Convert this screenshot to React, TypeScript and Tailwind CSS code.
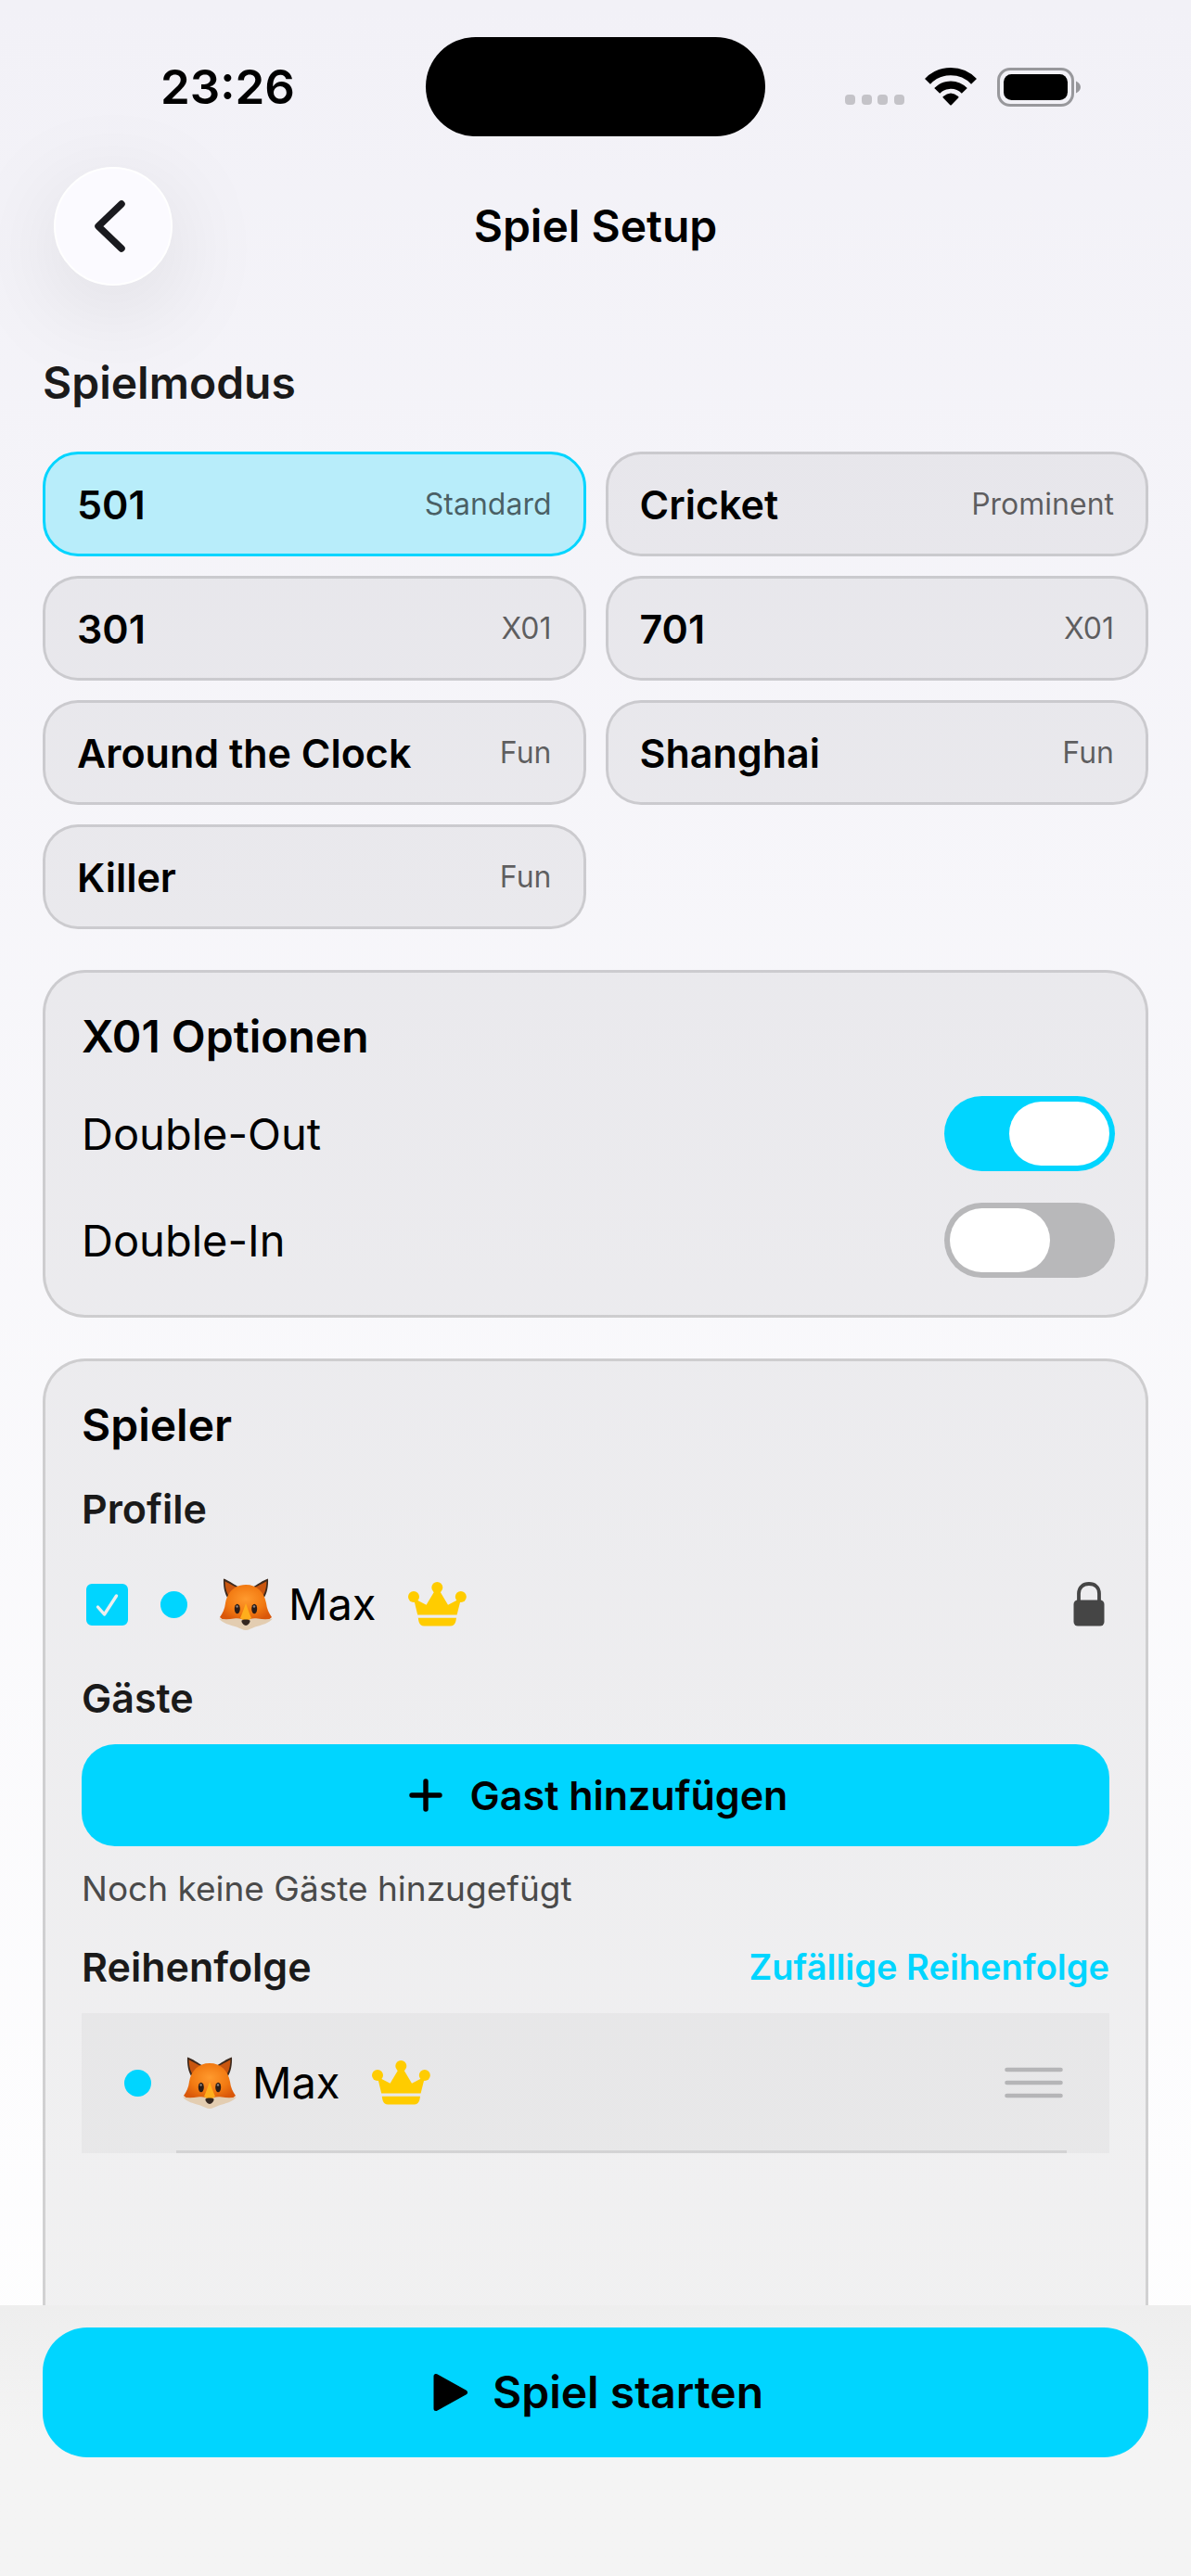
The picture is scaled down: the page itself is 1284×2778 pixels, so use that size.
import { useState } from 'react';

const modes = [
  { name: '501', tag: 'Standard' },
  { name: 'Cricket', tag: 'Prominent' },
  { name: '301', tag: 'X01' },
  { name: '701', tag: 'X01' },
  { name: 'Around the Clock', tag: 'Fun' },
  { name: 'Shanghai', tag: 'Fun' },
  { name: 'Killer', tag: 'Fun' },
];

function WifiIcon() {
  return (
    <svg width="56" height="41" viewBox="0 0 56 41" fill="none" stroke="black" strokeWidth="8.2">
      <path d="M3 14.8A34.6 34.6 0 0 1 53 14.8" />
      <path d="M13.2 24.9A20.4 20.4 0 0 1 42.8 24.9" />
      <path
        d="M28 39.5L20.5 31.8Q28 25.2 35.5 31.8Z"
        fill="black"
        strokeWidth="2"
        strokeLinejoin="round"
      />
    </svg>
  );
}

function BatteryIcon() {
  return (
    <svg width="91" height="42" viewBox="0 0 91 42">
      <rect x="1.5" y="1.5" width="80" height="39" rx="12.5" fill="none" stroke="#98989c" strokeWidth="3" />
      <rect x="7" y="7" width="69" height="28" rx="8.5" fill="black" />
      <path d="M85 14.5C88 16 90 18 90 21C90 24 88 26 85 27.5Z" fill="#98989c" />
    </svg>
  );
}

function SignalDots() {
  return (
    <svg width="64" height="11" viewBox="0 0 64 11" fill="#c4c3c8">
      <rect x="0" y="0" width="11" height="11" rx="4" />
      <rect x="18" y="0" width="11" height="11" rx="4" />
      <rect x="35" y="0" width="11" height="11" rx="4" />
      <rect x="53" y="0" width="11" height="11" rx="4" />
    </svg>
  );
}

function CrownIcon() {
  return (
    <svg width="63" height="48" viewBox="0 0 63 48" fill="#ffcc00" className="shrink-0">
      <circle cx="31.3" cy="6" r="6" />
      <circle cx="6" cy="16" r="6" />
      <circle cx="56.8" cy="16" r="6" />
      <path d="M6 18L9.5 19.5L19.6 24.8L29 9H33.6L43 24.8L53 19.5L57 18L52.6 35.5H10.2Z" />
      <path d="M10.8 38.7H52C51.4 42 51.2 47.4 45.6 47.4H17.2C11.6 47.4 11.4 42 10.8 38.7Z" />
    </svg>
  );
}

function LockIcon() {
  return (
    <svg width="34" height="48" viewBox="0 0 34 48">
      <rect x="0.5" y="19.5" width="33" height="28" rx="4.5" fill="#454545" />
      <path d="M6 21V12.5C6 6 10.5 2 17 2S28 6 28 12.5V21" fill="none" stroke="#454545" strokeWidth="3.8" />
    </svg>
  );
}

function FoxIcon() {
  return (
    <svg width="58" height="56" viewBox="0 0 58 56" className="shrink-0">
      <defs>
        <radialGradient id="fox-face" cx="50%" cy="38%" r="60%">
          <stop offset="0" stopColor="#ff9a2e" />
          <stop offset="0.6" stopColor="#f27a12" />
          <stop offset="1" stopColor="#d9570a" />
        </radialGradient>
      </defs>
      <path d="M5 0.5C4.6 8 6 17 10 22L22 10C17 7 10 2 5 0.5Z" fill="#3d2a1e" />
      <path d="M53 0.5C53.4 8 52 17 48 22L36 10C41 7 48 2 53 0.5Z" fill="#3d2a1e" />
      <path d="M6.6 3.2C6.6 10 8.5 17 12 21L22 11C17 9 10 5 6.6 3.2Z" fill="#c9560f" />
      <path d="M51.4 3.2C51.4 10 49.5 17 46 21L36 11C41 9 48 5 51.4 3.2Z" fill="#c9560f" />
      <path
        d="M29 7C17 7 9 15 7 27C6.4 33 4 38 1 42L8 48H50L57 42C54 38 51.6 33 51 27C49 15 41 7 29 7Z"
        fill="url(#fox-face)"
      />
      <path
        d="M0 43.5C5 44.5 11 44.5 16 43.5C21 42.5 25 43.5 29 46.5C33 43.5 37 42.5 42 43.5C47 44.5 53 44.5 58 43.5C54 48.5 46 50.5 39 52.5C35 54 32 56 29 56C26 56 23 54 19 52.5C12 50.5 4 48.5 0 43.5Z"
        fill="#e3cdb1"
      />
      <path d="M29 27C27 33 25 38 23 43L29 46.5L35 43C33 38 31 33 29 27Z" fill="#ffae1c" />
      <ellipse cx="19.8" cy="33" rx="3" ry="5.2" fill="#2a1c17" />
      <ellipse cx="38.2" cy="33" rx="3" ry="5.2" fill="#2a1c17" />
      <circle cx="19.6" cy="30.5" r="1.2" fill="#8f8580" />
      <circle cx="38" cy="30.5" r="1.2" fill="#8f8580" />
      <path d="M24.4 45.8C26 44 32 44 33.6 45.8C33.6 48.5 31 51 29 51S24.4 48.5 24.4 45.8Z" fill="#33261f" />
    </svg>
  );
}

function Player({ name }: { name: string }) {
  return (
    <>
      <span className="size-[29px] rounded-full bg-[#00d5ff]" />
      <span className="ml-[34px] flex items-center gap-[17px] text-[47px]/[60px]">
        <FoxIcon />
        {name}
      </span>
      <span className="ml-[34px]">
        <CrownIcon />
      </span>
    </>
  );
}

interface SwitchRowProps {
  label: string;
  checked: boolean;
  onChange: (checked: boolean) => void;
}

function SwitchRow({ label, checked, onChange }: SwitchRowProps) {
  return (
    <label className="flex items-center justify-between text-[47px]/[60px]">
      {label}
      <input
        type="checkbox"
        role="switch"
        checked={checked}
        onChange={(e) => onChange(e.target.checked)}
        className="h-[81px] w-[184px] shrink-0 cursor-pointer appearance-none rounded-full bg-[#b8b8ba] p-1.5 before:block before:h-[69px] before:w-[108px] before:rounded-full before:bg-white checked:bg-[#00d5ff] checked:before:ml-16"
      />
    </label>
  );
}

export default function App() {
  const [mode, setMode] = useState('501');
  const [doubleOut, setDoubleOut] = useState(true);
  const [doubleIn, setDoubleIn] = useState(false);
  const [maxSelected, setMaxSelected] = useState(true);

  return (
    <div className="flex h-screen flex-col bg-linear-to-b from-[#f2f1f7] to-white font-['Inter',sans-serif] text-black">
      {/* Status bar */}
      <div className="grid shrink-0 grid-cols-[1fr_366px_1fr] items-center pt-10">
        <div className="pl-8 text-center text-[51px]/[60px] font-semibold">23:26</div>
        <div className="h-[107px] rounded-full bg-black" />
        <div className="flex items-center justify-center gap-[22px] pr-8">
          <span className="pt-7">
            <SignalDots />
          </span>
          <WifiIcon />
          <BatteryIcon />
        </div>
      </div>

      {/* Navigation */}
      <header className="grid shrink-0 grid-cols-[128px_1fr_128px] items-center px-[58px] pt-[33px]">
        <button
          aria-label="Zurück"
          className="flex size-32 items-center justify-center rounded-full border-2 border-white bg-[#fbfaff] pr-2 shadow-[0_24px_110px_rgba(0,0,0,0.1)]">
          <svg width="34" height="58" viewBox="0 0 34 58" fill="none" stroke="#1a1a1f" strokeWidth="7.5" strokeLinecap="round" strokeLinejoin="round">
            <path d="M30 5L5 29L30 53" />
          </svg>
        </button>
        <h1 className="text-center text-5xl/[60px] font-semibold">Spiel Setup</h1>
      </header>

      <main className="min-h-0 flex-1 overflow-y-auto px-[46px] pt-[75px] [scrollbar-width:none]">
        <h2 className="text-5xl/[60px] font-semibold text-[#1a1a1a]">Spielmodus</h2>

        <div className="mt-11 grid grid-cols-2 gap-[21px]">
          {modes.map((m) => (
            <button
              key={m.name}
              aria-pressed={m.name === mode}
              onClick={() => setMode(m.name)}
              className={`flex h-[113px] items-center justify-between rounded-[38px] border-3 px-[34px] ${
                m.name === mode ? 'border-[#00d5ff] bg-[#b8edfa]' : 'border-black/13 bg-black/5'
              }`}>
              <span className="text-[43px]/[54px] font-semibold">{m.name}</span>
              <span className="text-[32px]/[40px] text-black/60">{m.tag}</span>
            </button>
          ))}
        </div>

        <section className="mt-11 flex flex-col gap-[34px] rounded-[46px] border-3 border-black/13 bg-black/5 pt-[39px] pr-[33px] pb-10 pl-[39px]">
          <h2 className="text-5xl/[60px] font-semibold">X01 Optionen</h2>
          <SwitchRow label="Double-Out" checked={doubleOut} onChange={setDoubleOut} />
          <SwitchRow label="Double-In" checked={doubleIn} onChange={setDoubleIn} />
        </section>

        <section className="mt-11 rounded-[46px] border-3 border-black/13 bg-black/5 px-[39px] pt-[39px] pb-80">
          <h2 className="text-5xl/[60px] font-semibold">Spieler</h2>

          <h3 className="mt-[33px] text-[43px]/[54px] font-semibold text-[#1a1a1a]">Profile</h3>
          <div className="mt-9 flex h-20 items-center px-[5px]">
            <span className="mr-[35px] grid">
              <input
                type="checkbox"
                aria-label="Max"
                checked={maxSelected}
                onChange={(e) => setMaxSelected(e.target.checked)}
                className="peer col-start-1 row-start-1 size-[45px] cursor-pointer appearance-none rounded-md border-3 border-[#00d5ff] checked:bg-[#00d5ff]"
              />
              <svg
                viewBox="0 0 45 45"
                fill="none"
                stroke="#eeeeee"
                strokeWidth="3.4"
                strokeLinecap="round"
                strokeLinejoin="round"
                className="pointer-events-none invisible col-start-1 row-start-1 size-[45px] peer-checked:visible">
                <path d="M12.5 25L19.5 33L32.5 13" />
              </svg>
            </span>
            <Player name="Max" />
            <span className="ml-auto">
              <LockIcon />
            </span>
          </div>

          <h3 className="mt-[34px] text-[43px]/[54px] font-semibold text-[#1a1a1a]">Gäste</h3>
          <button className="mt-[23px] flex h-[110px] w-full items-center justify-center gap-[30px] rounded-[36px] bg-[#00d5ff] pl-1.5 text-[43px]/[54px] font-semibold">
            <svg width="36" height="36" viewBox="0 0 36 36" stroke="black" strokeWidth="5.4" strokeLinecap="round">
              <path d="M18 3V33M3 18H33" />
            </svg>
            Gast hinzufügen
          </button>
          <p className="mt-[22px] text-[37px]/[48px] text-[#4a4a4a]">Noch keine Gäste hinzugefügt</p>

          <div className="mt-[33px] flex items-center justify-between">
            <h3 className="text-[43px]/[54px] font-semibold text-[#1a1a1a]">Reihenfolge</h3>
            <button className="text-[38px]/[48px] font-semibold text-[#00d5ff]">Zufällige Reihenfolge</button>
          </div>
          <ul className="mt-[23px] bg-black/3">
            <li>
              <div className="flex h-[148px] items-center pt-0.5 pr-[50px] pl-[46px]">
                <Player name="Max" />
                <svg width="63" height="34" viewBox="0 0 63 34" stroke="#b5b5b7" strokeWidth="4.6" strokeLinecap="round" className="ml-auto">
                  <path d="M2.5 3H60.5M2.5 17H60.5M2.5 31H60.5" />
                </svg>
              </div>
              <div className="mr-[46px] ml-[102px] h-[3px] bg-black/9" />
            </li>
          </ul>
        </section>
      </main>

      <footer className="shrink-0 bg-linear-to-b from-[#eeeeee] via-[#f4f4f4] to-[#f4f4f4] px-[46px] pt-6 pb-32">
        <button className="flex h-[140px] w-full items-center justify-center gap-[26px] rounded-[48px] bg-[#00d5ff] pl-1.5 text-5xl/[60px] font-semibold">
          <svg width="38" height="42" viewBox="0 0 38 42" stroke="black" strokeWidth="5" strokeLinejoin="round">
            <path d="M3 3.5V38.5L34.5 21Z" />
          </svg>
          Spiel starten
        </button>
      </footer>
    </div>
  );
}
